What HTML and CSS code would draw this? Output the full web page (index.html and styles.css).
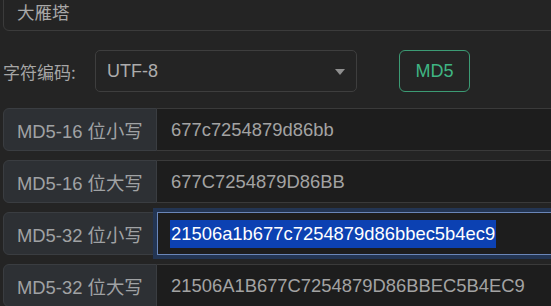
FILE: index.html
```html
<!DOCTYPE html>
<html lang="zh-CN">
<head>
<meta charset="utf-8">
<title>MD5</title>
<link rel="stylesheet" href="styles.css">
</head>
<body>
<div class="page">
  <div class="source">大雁塔</div>
  <div class="options">
    <span class="opt-label">字符编码:</span>
    <div class="select">
      <span class="select-value">UTF-8</span>
      <span class="caret"></span>
    </div>
    <button class="btn-md5">MD5</button>
  </div>
  <div class="results">
    <div class="group">
      <div class="group-label">MD5-16 位小写</div>
      <div class="group-input">677c7254879d86bb</div>
    </div>
    <div class="group">
      <div class="group-label">MD5-16 位大写</div>
      <div class="group-input">677C7254879D86BB</div>
    </div>
    <div class="group">
      <div class="group-label">MD5-32 位小写</div>
      <div class="group-input focused"><span class="sel">21506a1b677c7254879d86bbec5b4ec9</span></div>
    </div>
    <div class="group">
      <div class="group-label">MD5-32 位大写</div>
      <div class="group-input">21506A1B677C7254879D86BBEC5B4EC9</div>
    </div>
  </div>
</div>
</body>
</html>
```
FILE: styles.css
```css
html, body {
  margin: 0;
  padding: 0;
  background: #242424;
  overflow: hidden;
}
body {
  width: 551px;
  height: 306px;
  font-family: "Liberation Sans", "Noto Sans CJK SC", sans-serif;
  font-size: 18.4px;
  color: #a3a3a3;
}
.page {
  padding-left: 3px;
  width: 620px;
}
.source {
  margin-top: -20px;
  height: 51px;
  border: 1px solid #3b3b3b;
  border-radius: 6px;
  box-sizing: border-box;
  padding: 18px 0 0 13px;
  line-height: 26px;
  font-family: "Noto Sans CJK SC", sans-serif;
  font-size: 17.5px;
  color: #a8a8a8;
}
.options {
  display: flex;
  align-items: center;
  margin-top: 19px;
  height: 42px;
}
.opt-label {
  font-family: "Noto Sans CJK SC", sans-serif;
  font-size: 17px;
  width: 92px;
  color: #a6a6a6;
}
.select {
  width: 262px;
  height: 42px;
  box-sizing: border-box;
  border: 1px solid #3e3e3e;
  border-radius: 5px;
  display: flex;
  align-items: center;
  justify-content: space-between;
  padding: 0 11px 0 11px;
}
.select-value {
  color: #acacac;
  font-size: 18px;
}
.caret {
  width: 0;
  height: 0;
  border-left: 5px solid transparent;
  border-right: 5px solid transparent;
  border-top: 6px solid #8f8f8f;
  margin-top: 2px;
}
.btn-md5 {
  margin-left: 42px;
  width: 71px;
  height: 42px;
  background: #242424;
  border: 1px solid #3c9b74;
  border-radius: 6px;
  color: #3fb583;
  font-family: "Liberation Sans", sans-serif;
  font-size: 18px;
  padding: 0;
}
.results {
  margin-top: 16px;
  display: flex;
  flex-direction: column;
  gap: 9px;
}
.group {
  display: flex;
  height: 43px;
}
.group-label {
  width: 154px;
  box-sizing: border-box;
  background: #2d3034;
  border: 1px solid #3a3d41;
  border-radius: 6px 0 0 6px;
  padding-left: 13px;
  display: flex;
  align-items: center;
  color: #a0a2a4;
}
.group-input {
  flex: 1;
  background: #1d1d1d;
  border-top: 1px solid #3a3a3a;
  border-bottom: 1px solid #3a3a3a;
  display: flex;
  align-items: center;
  padding-left: 14px;
  color: #a3a3a3;
}
.group-input.focused {
  border: 1px solid #6a86b8;
  box-shadow: 0 0 0 4px #233553;
  position: relative;
  z-index: 1;
  padding-left: 12px;
}
.sel {
  background: #0c41b2;
  color: #ffffff;
  line-height: 28px;
  padding: 0 1px;
}
```
